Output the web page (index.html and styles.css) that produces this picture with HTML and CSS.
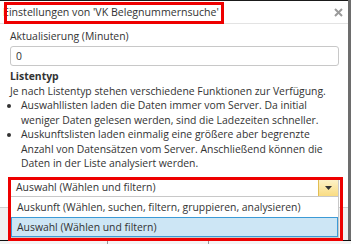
FILE: index.html
```html
<!DOCTYPE html>
<html lang="de">
<head>
    <meta charset="UTF-8">
    <title>Einstellungen</title>
    <link rel="stylesheet" href="styles.css">
</head>
<body>
    <div class="dialog">
        <div class="titlebar">
            <span class="title">Einstellungen von 'VK Belegnummernsuche'</span>
            <svg class="close" width="9" height="9" viewBox="0 0 9 9"><path d="M1 1L8 8M8 1L1 8" stroke="#9a9a9a" stroke-width="2"/></svg>
        </div>
        <div class="content">
            <label class="field-label" for="interval">Aktualisierung (Minuten)</label>
            <input class="field" id="interval" type="text" value="0">
            <div class="section-title">Listentyp</div>
            <p class="text">Je nach Listentyp stehen verschiedene Funktionen zur Verfügung.</p>
            <ul class="bullets">
                <li>Auswahllisten laden die Daten immer vom Server. Da initial weniger Daten gelesen werden, sind die Ladezeiten schneller.</li>
                <li>Auskunftslisten laden einmalig eine größere aber begrenzte Anzahl von Datensätzen vom Server. Anschließend können die Daten in der Liste analysiert werden.</li>
            </ul>
            <div class="combo">
                <div class="combo-field">
                    <span class="combo-value">Auswahl (Wählen und filtern)</span>
                    <span class="combo-btn"><svg width="7" height="4" viewBox="0 0 7 4"><path d="M0 0H7L3.5 4Z" fill="#333"/></svg></span>
                </div>
                <ul class="combo-list">
                    <li>Auskunft (Wählen, suchen, filtern, gruppieren, analysieren)</li>
                    <li class="selected">Auswahl (Wählen und filtern)</li>
                </ul>
                <div class="mark mark-combo"></div>
            </div>
        </div>
        <div class="footer"></div>
        <div class="mark mark-title"></div>
    </div>
    <div class="taskbar">
        <span class="cell cell-a"></span>
        <span class="cell cell-b"></span>
    </div>
</body>
</html>
```
FILE: styles.css
```css
body {
    margin: 0;
    padding: 0;
    font-family: "Open Sans", "Liberation Sans", sans-serif;
    font-size: 10.4px;
    color: #333;
    background: #6d6d6d;
    width: 351px;
    height: 244px;
    overflow: hidden;
}
.dialog {
    position: relative;
    width: 348px;
    background: #fff;
    border-top: 1px solid #1a1a1a;
}
.titlebar {
    height: 22px;
    display: flex;
    align-items: center;
    justify-content: space-between;
    padding: 0 5px 0 3px;
    border-bottom: 1px solid #e3e3e3;
}
.title {
    font-size: 10.6px;
    color: #333;
    margin-top: -1px;
}
.close {
    margin-top: 1px;
}
.content {
    padding: 5px 9px 10px 10px;
}
.field-label {
    display: block;
    line-height: 15px;
}
.field {
    display: block;
    box-sizing: border-box;
    width: 100%;
    height: 20px;
    margin: 2px 0 3px;
    padding: 0 5px;
    border: 1px solid #c8c8c8;
    border-radius: 3px;
    font: inherit;
    color: #333;
}
.section-title {
    font-weight: 700;
    line-height: 14.5px;
}
.text {
    margin: 0;
    line-height: 14.5px;
}
.bullets {
    margin: 0;
    padding: 0 0 0 11px;
    line-height: 14.5px;
}
.bullets li {
    list-style: disc;
}
.combo {
    position: relative;
    margin-top: 7.5px;
}
.combo-field {
    display: flex;
    height: 19px;
    box-sizing: border-box;
    border: 1px solid #c8c8c8;
    background: #fff;
}
.combo-value {
    flex: 1;
    padding: 0 5px;
    line-height: 17px;
}
.combo-btn {
    width: 19px;
    display: flex;
    align-items: center;
    justify-content: center;
    border-left: 1px solid #e2bd52;
    background: linear-gradient(#fdf3cc, #f9dc82);
}
.combo-list {
    position: absolute;
    left: 0;
    right: 0;
    top: 19px;
    margin: 0;
    padding: 0;
    list-style: none;
    background: #fff;
    border: 1px solid #c8c8c8;
    border-top: none;
    z-index: 2;
}
.combo-list li {
    height: 18px;
    line-height: 18px;
    padding: 0 5px;
    border: 1px solid transparent;
}
.combo-list .selected {
    background: #cde6f5;
    border-color: #3c9ad6;
}
.mark {
    position: absolute;
    border: 3px solid #ee0000;
    z-index: 3;
}
.mark-title {
    left: 4px;
    top: 1px;
    width: 214px;
    height: 16px;
}
.mark-combo {
    left: -2px;
    top: -1px;
    width: 329px;
    height: 58px;
}
.footer {
    height: 32px;
    background: #f0f0f0;
    border-top: 1px solid #cfcfcf;
}
.taskbar {
    display: flex;
    height: 4px;
    border-top: 1px solid #111;
    background: #f4f4f4;
}
.cell {
    border-right: 1px solid #999;
}
.cell-a {
    width: 107px;
}
.cell-b {
    width: 100px;
}
```
